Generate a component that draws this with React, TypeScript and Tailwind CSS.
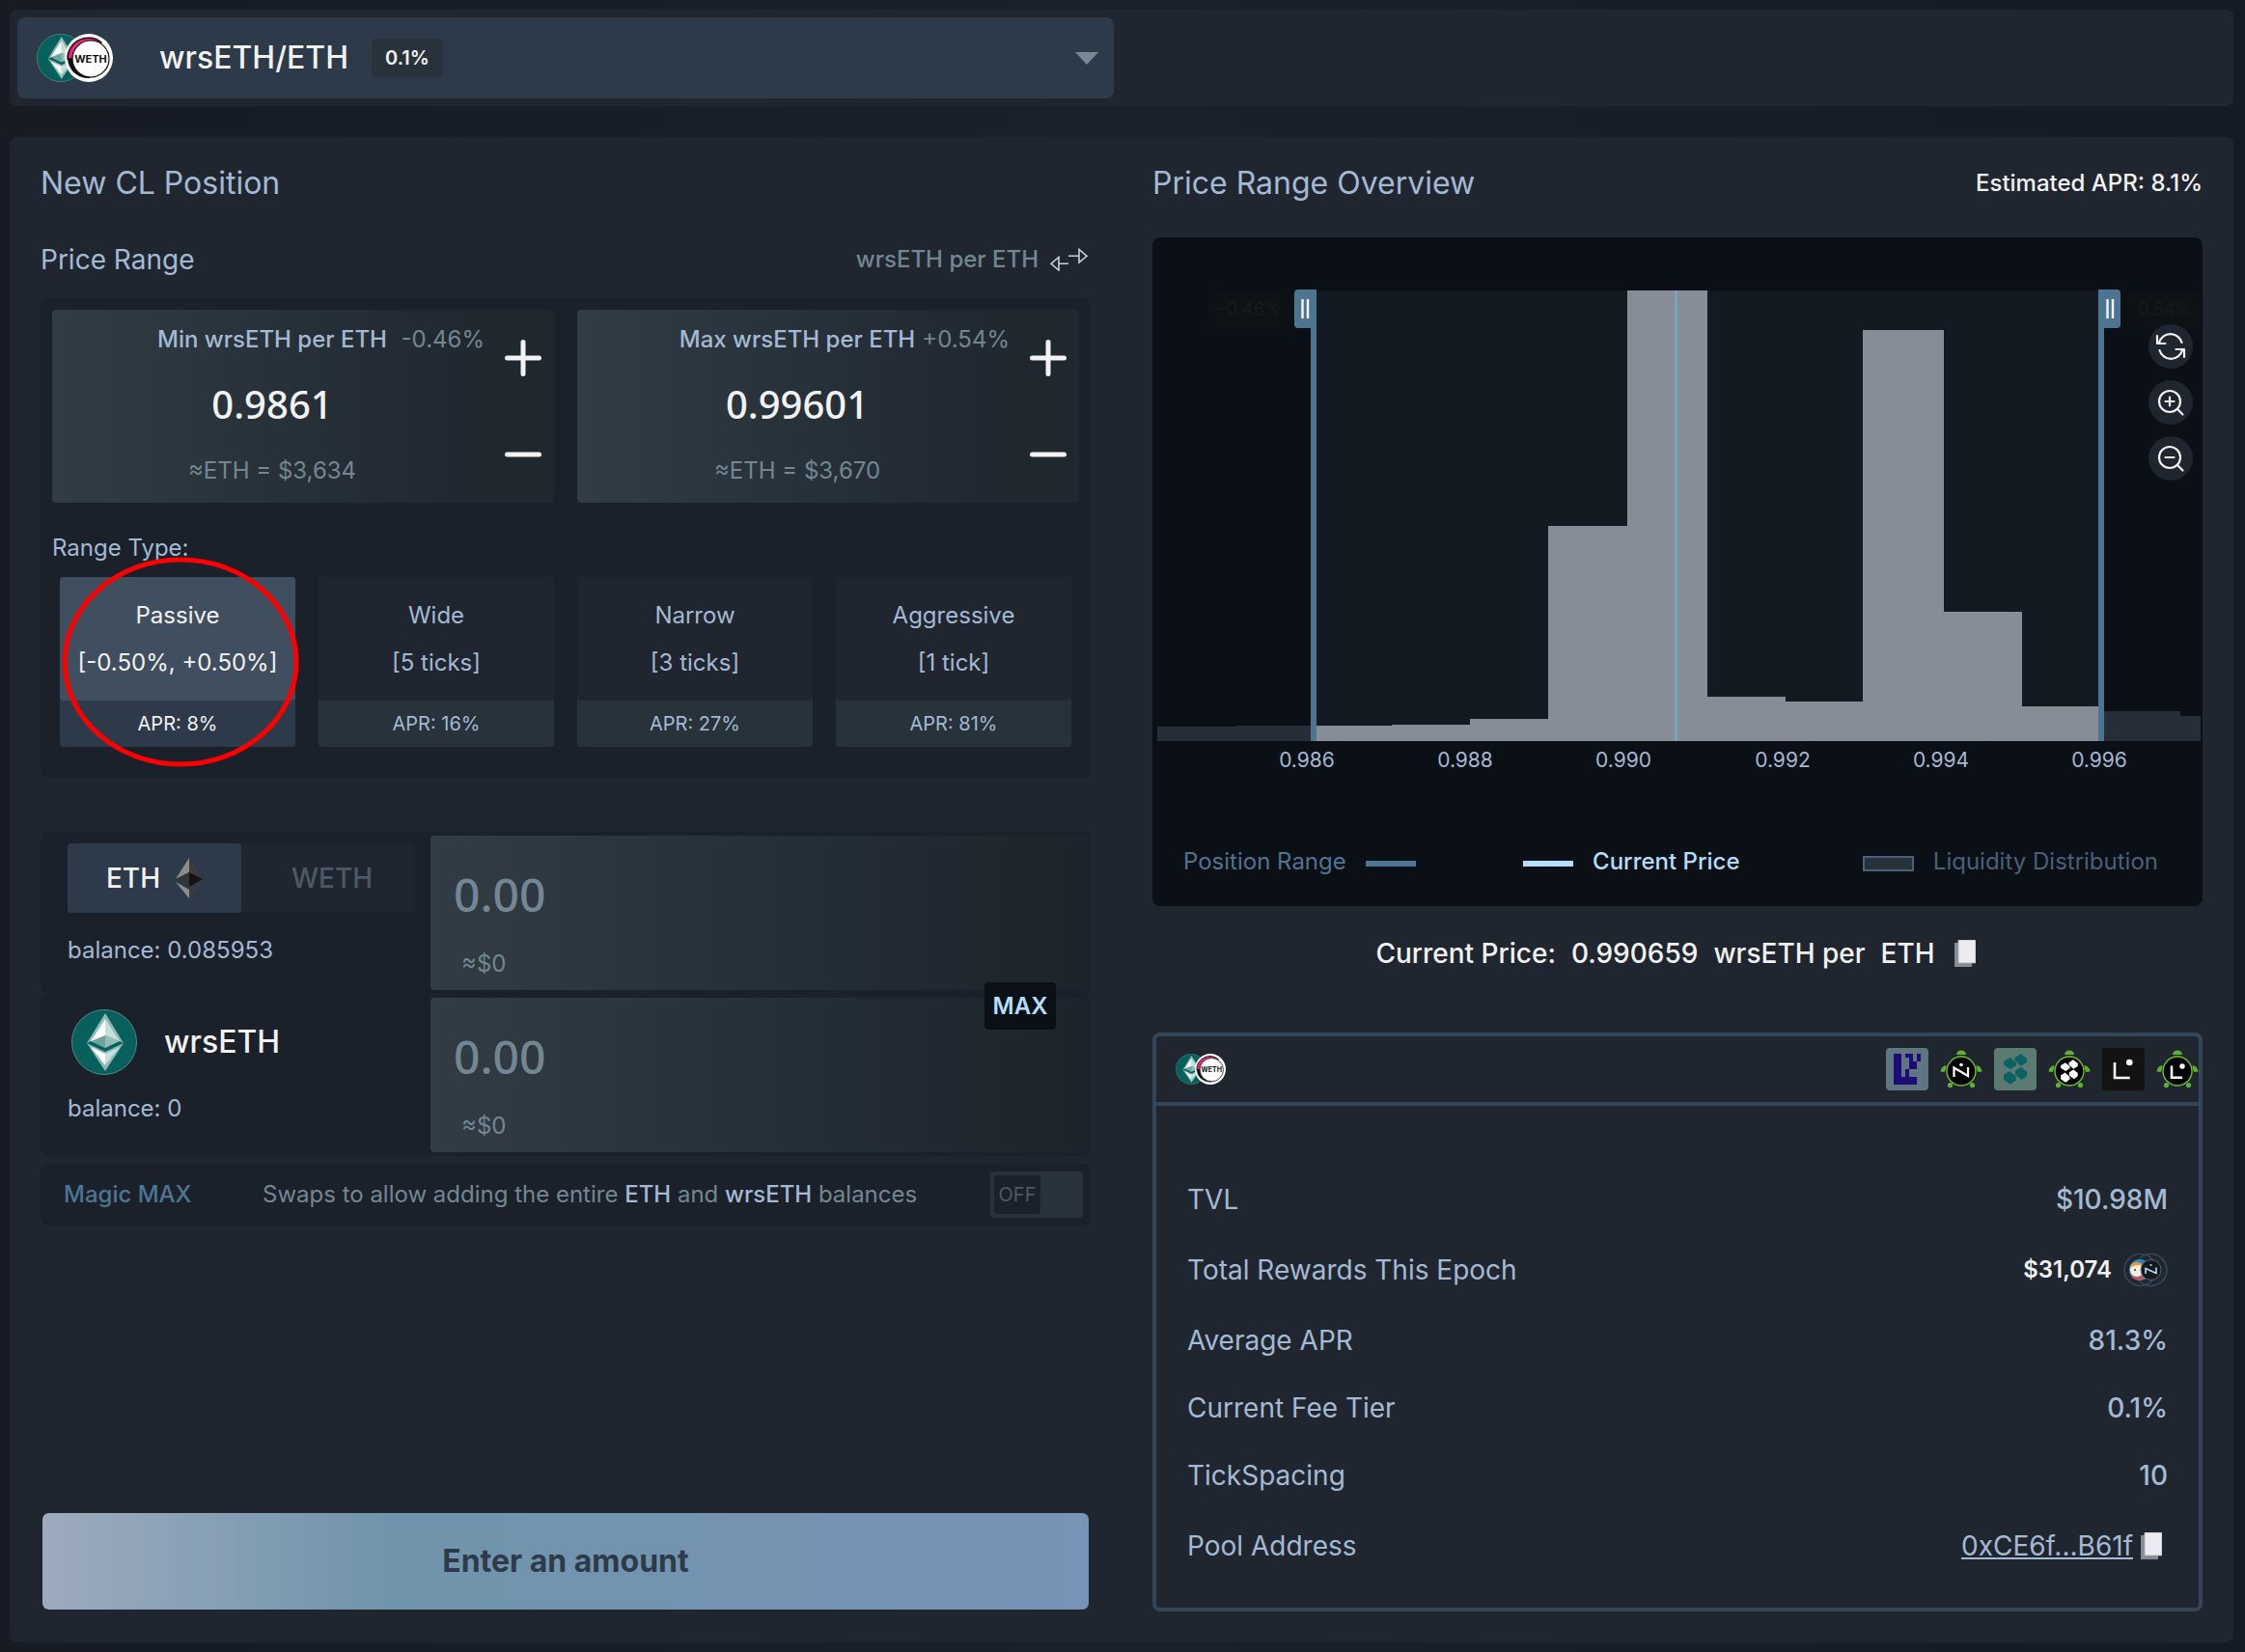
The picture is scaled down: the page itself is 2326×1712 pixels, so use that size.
import { useState } from 'react';

interface RangeType {
  name: string;
  detail: string;
  apr: string;
}

const RANGE_TYPES: RangeType[] = [
  { name: 'Passive', detail: '[-0.50%, +0.50%]', apr: '8%' },
  { name: 'Wide', detail: '[5 ticks]', apr: '16%' },
  { name: 'Narrow', detail: '[3 ticks]', apr: '27%' },
  { name: 'Aggressive', detail: '[1 tick]', apr: '81%' },
];

// [left, right, top] in chart units
const BARS_IN_RANGE = [
  [170, 248, 506],
  [248, 329, 505],
  [329, 410, 499],
  [410, 492, 299],
  [492, 575, 55],
  [575, 656, 476],
  [656, 736, 481],
  [736, 820, 96],
  [820, 901, 388],
  [901, 980, 486],
];

const BARS_OUTSIDE = [
  [5, 86, 507],
  [86, 164, 506],
  [986, 1065, 491],
  [1065, 1086, 496],
];

const AXIS_LABELS = [
  { x: 160, label: '0.986' },
  { x: 324, label: '0.988' },
  { x: 488, label: '0.990' },
  { x: 653, label: '0.992' },
  { x: 817, label: '0.994' },
  { x: 981, label: '0.996' },
];

const BASELINE = 522;

function WrsEthCoin({ className }: { className: string }) {
  return (
    <svg viewBox="0 0 68 68" className={className} aria-hidden="true">
      <circle cx="34" cy="34" r="33.5" fill="#08605c" stroke="#4f8a86" strokeWidth="1" />
      <path d="M35 4 L54 35 L35 64 L16 35 Z" fill="#8fb9b5" />
      <path d="M35 10 L20 33 L35 40 Z" fill="#ffffff" />
      <path d="M35 10 L50 33 L35 40 Z" fill="#c5e0dd" />
      <path d="M20 33 L35 27 L50 33 L35 40 Z" fill="#6fa39f" />
      <path d="M35 27 L50 33 L35 40 Z" fill="#94bcb8" />
      <path d="M16 35 L35 44 L54 35 L50 33 L35 40 L20 33 Z" fill="#08605c" />
      <path d="M20 39 L35 46 L35 58 Z" fill="#ffffff" />
      <path d="M50 39 L35 46 L35 58 Z" fill="#c5e0dd" />
    </svg>
  );
}

function WethCoin({ className }: { className: string }) {
  return (
    <svg viewBox="0 0 50 50" className={className} aria-hidden="true">
      <circle cx="25" cy="25" r="25" fill="#ffffff" />
      <path d="M3 26 A21.5 21.5 0 0 1 38 9 L25 25 Z" fill="#f5217f" stroke="#111111" strokeWidth="1.5" />
      <path d="M3 26 A21.5 21.5 0 0 0 25 46 L32 44 L25 25 Z" fill="#0c0c0c" />
      <circle cx="27" cy="26" r="19" fill="#ffffff" stroke="#111111" strokeWidth="1.2" />
      <text
        x="27"
        y="30"
        textAnchor="middle"
        fontFamily="Inter, sans-serif"
        fontSize="11"
        fontWeight="700"
        fill="#111111"
      >
        WETH
      </text>
    </svg>
  );
}

function EthMark() {
  return (
    <svg viewBox="0 0 28 42" className="h-[42px] w-7" aria-hidden="true">
      <path d="M14 0 L0 22 L14 15 Z" fill="#8c8c8c" />
      <path d="M14 0 L28 22 L14 15 Z" fill="#3c3c3b" />
      <path d="M0 22 L14 15 L14 30 Z" fill="#343434" />
      <path d="M28 22 L14 15 L14 30 Z" fill="#141414" />
      <path d="M0 25 L14 33 L14 42 Z" fill="#8c8c8c" />
      <path d="M28 25 L14 33 L14 42 Z" fill="#3c3c3b" />
    </svg>
  );
}

function SwapArrows() {
  return (
    <svg
      viewBox="0 0 39 24"
      className="h-6 w-[39px]"
      fill="none"
      stroke="#c9ced6"
      strokeWidth="1.6"
      aria-hidden="true"
    >
      <path d="M1 16.3 L9 9.5 V23 Z M9 16.3 H19" />
      <path d="M38 8.3 L30 1.5 V15 Z M30 8.3 H19" />
    </svg>
  );
}

function CopyIcon() {
  return (
    <svg viewBox="0 0 22 28" className="h-7 w-[22px]" aria-hidden="true">
      <rect x="0" y="3" width="18" height="25" fill="#868b94" />
      <rect x="4" y="0" width="18" height="24" fill="#ebebf0" stroke="#a9acb3" strokeWidth="0.8" />
    </svg>
  );
}

function ScrollPieces() {
  return (
    <>
      <path d="M21.5 10 L27.5 6 L34 11 V15 L28 18.8 L21.5 13 Z" />
      <path d="M10 14 L16.5 10 L23 15.5 V18 L17 22 L10 17.5 Z" />
      <path d="M22 23.5 L28 19.8 L34 24.5 V29 L28.5 33 L22 27.5 Z" />
      <path d="M10 28 L16 24 L22.8 29.5 V33.5 L17 37.8 L10 33 Z" />
    </>
  );
}

function Turtle({ children }: { children: React.ReactNode }) {
  return (
    <svg viewBox="0 0 44 44" className="size-11" aria-hidden="true">
      <g fill="#5fb32c">
        <path d="M17 7 Q17.5 2.5 22 2.5 Q26.5 2.5 27 7 Z" />
        <path d="M0.5 24.5 Q1 19 6.5 18 Q6.5 22 4.5 25 Z" />
        <path d="M43.5 24.5 Q43 19 37.5 18 Q37.5 22 39.5 25 Z" />
        <circle cx="10.5" cy="38.5" r="2.6" />
        <circle cx="33.5" cy="38.5" r="2.6" />
      </g>
      <circle cx="22" cy="24" r="15" fill="#000000" stroke="#6cc332" strokeWidth="1.4" />
      {children}
    </svg>
  );
}

function BoosterIcons() {
  return (
    <div className="flex gap-3">
      <svg viewBox="0 0 44 44" className="size-11" aria-hidden="true">
        <rect width="44" height="44" rx="4" fill="#5f7682" />
        <path
          d="M8 6 H16 V30 H20 V22 H24 V10 H20 V6 H28 V14 H32 V22 H24 V30 H32 V38 H8 Z M32 6 H36 V14 H32 Z"
          fill="#1c0d74"
        />
      </svg>
      <Turtle>
        <path d="M14.5 30 V20.5 L29 29 V20" fill="none" stroke="#ffffff" strokeWidth="2.2" />
        <circle cx="22" cy="17.5" r="1.8" fill="#ffffff" />
      </Turtle>
      <svg viewBox="0 0 44 44" className="size-11" aria-hidden="true">
        <rect width="44" height="44" rx="4" fill="#5b7b72" />
        <g fill="#0b6162">
          <ScrollPieces />
        </g>
      </svg>
      <Turtle>
        <g fill="#ffffff" transform="translate(5.6 7.8) scale(0.74)">
          <ScrollPieces />
        </g>
      </Turtle>
      <svg viewBox="0 0 44 44" className="size-11" aria-hidden="true">
        <rect width="44" height="44" fill="#131313" />
        <path d="M13 15 V31 H28.7" fill="none" stroke="#ffffff" strokeWidth="2.6" />
        <circle cx="28.3" cy="15" r="3.3" fill="#ffffff" />
      </svg>
      <Turtle>
        <path d="M16 18.5 V30.8 H27" fill="none" stroke="#ffffff" strokeWidth="2.6" />
        <circle cx="27" cy="19" r="2.7" fill="#ffffff" />
      </Turtle>
    </div>
  );
}

function RewardCoins() {
  return (
    <svg viewBox="0 0 46 36" className="h-9 w-[46px]" aria-hidden="true">
      <circle cx="17.5" cy="18" r="16.5" fill="none" stroke="#34475a" strokeWidth="1.6" />
      <circle cx="28.5" cy="18" r="16.5" fill="none" stroke="#34475a" strokeWidth="1.6" />
      <circle cx="17" cy="18" r="11" fill="#2f86b8" />
      <path d="M7 17 Q8 9 16 11 Q21 12 22 18 Q20 25 14 25 Q7 25 7 17 Z" fill="#fbeade" />
      <path d="M7 16 Q8 9 15 10 Q19 11 20 14 Q13 11 7 16 Z" fill="#e8963f" />
      <path d="M8 24 Q14 27 21 24 L20 28 Q14 30 9 26 Z" fill="#d84a45" />
      <circle cx="12" cy="18" r="1" fill="#333333" />
      <circle cx="28.5" cy="18" r="10.5" fill="#16181c" stroke="#4f7a96" strokeWidth="0.8" />
      <path d="M23 22 V16.5 L34 21.5 V15.5" fill="none" stroke="#b3defb" strokeWidth="1.6" />
      <circle cx="28.5" cy="13" r="1.1" fill="#b3defb" />
    </svg>
  );
}

function PriceCard({
  id,
  label,
  pct,
  value,
  approx,
  onChange,
}: {
  id: string;
  label: string;
  pct: string;
  value: string;
  approx: string;
  onChange: (v: string) => void;
}) {
  return (
    <div className="flex h-[200px] flex-1 rounded bg-linear-to-r from-[#313c45] via-[#27313a] via-45% to-[#1f272f] to-88%">
      <div className="flex min-w-0 flex-1 flex-col gap-7 pt-[15px] text-2xl">
        <div className="grid grid-cols-[1fr_auto_1fr] leading-8">
          <label htmlFor={id} className="col-start-2 font-medium text-[#a3bad2]">
            {label}
          </label>
          <span className="pr-2 text-right text-[#728792]">{pct}</span>
        </div>
        <input
          id={id}
          value={value}
          onChange={(e) => onChange(e.target.value)}
          className="h-12 w-full bg-transparent pb-0.5 text-center font-['Noto_Sans',sans-serif] text-[40px] font-medium text-[#f2f2f2] outline-none"
        />
        <p className="text-center leading-8 text-[#728792]">{approx}</p>
      </div>
      <div className="flex w-16 flex-col">
        <button aria-label={`Increase ${label}`} className="flex h-[100px] items-center justify-center">
          <svg viewBox="0 0 38 38" className="size-[38px]" stroke="#f2f2f2" strokeWidth="5" strokeLinecap="round">
            <path d="M2.5 19 H35.5 M19 2.5 V35.5" />
          </svg>
        </button>
        <button aria-label={`Decrease ${label}`} className="flex h-[100px] items-center justify-center">
          <svg viewBox="0 0 38 38" className="size-[38px]" stroke="#f2f2f2" strokeWidth="5" strokeLinecap="round">
            <path d="M2.5 19 H35.5" />
          </svg>
        </button>
      </div>
    </div>
  );
}

function AmountField({ label }: { label: string }) {
  return (
    <div className="flex-1 rounded bg-linear-to-r from-[#313c45] via-[#263139] via-45% to-[#1c232b] pl-6 pt-8">
      <input
        aria-label={label}
        placeholder="0.00"
        className="block h-14 w-full bg-transparent font-['Noto_Sans',sans-serif] text-5xl font-medium text-[#f2f2f2] outline-none placeholder:text-[#728792]"
      />
      <p className="mt-[29px] pl-2 text-2xl leading-8 text-[#728792]">≈$0</p>
    </div>
  );
}

function LiquidityChart() {
  return (
    <svg viewBox="0 0 1088 600" className="block w-full" fontFamily="Inter, sans-serif">
      <rect x="58" y="55" width="82" height="41" rx="8" fill="#0d1216" />
      <text x="99" y="81" textAnchor="middle" fontSize="18" fill="#151b20">
        −0.46%
      </text>
      <rect x="1009" y="55" width="79" height="41" rx="8" fill="#0d1216" />
      <text x="1049" y="81" textAnchor="middle" fontSize="18" fill="#151b20">
        0.54%
      </text>
      <rect x="164" y="55" width="822" height="467" fill="#131a21" />
      {BARS_OUTSIDE.map(([x1, x2, y]) => (
        <rect key={x1} x={x1} y={y} width={x2 - x1} height={BASELINE - y} fill="#262f38" />
      ))}
      {BARS_IN_RANGE.map(([x1, x2, y]) => (
        <rect key={x1} x={x1} y={y} width={x2 - x1} height={BASELINE - y} fill="#878d96" />
      ))}
      <rect x="541" y="55" width="3" height="467" fill="#7ba3be" />
      <rect x="164" y="54" width="6" height="468" fill="#4d7590" />
      <rect x="980" y="54" width="6" height="468" fill="#4d7590" />
      <path d="M170 54 H151 Q147 54 147 58 V90 Q147 94 151 94 H170 Z" fill="#4d7590" />
      <path d="M980 54 H999 Q1003 54 1003 58 V90 Q1003 94 999 94 H980 Z" fill="#4d7590" />
      <path d="M155.5 64 V84 M161 64 V84 M989.5 64 V84 M995 64 V84" stroke="#f5f7fa" strokeWidth="2.4" />
      {AXIS_LABELS.map(({ x, label }) => (
        <text key={label} x={x} y="549" textAnchor="middle" fontSize="21" fill="#a3bad2">
          {label}
        </text>
      ))}
    </svg>
  );
}

function ChartButton({ label, children }: { label: string; children: React.ReactNode }) {
  return (
    <button aria-label={label} className="flex size-[46px] items-center justify-center rounded-full bg-[#20262f]">
      <svg
        viewBox="-16 -16 32 32"
        className="size-8"
        fill="none"
        stroke="#f2f2f2"
        strokeWidth="2.2"
        strokeLinecap="round"
        strokeLinejoin="round"
      >
        {children}
      </svg>
    </button>
  );
}

export default function App() {
  const [minPrice, setMinPrice] = useState('0.9861');
  const [maxPrice, setMaxPrice] = useState('0.99601');
  const [rangeType, setRangeType] = useState('Passive');
  const [magicMax, setMagicMax] = useState(false);

  return (
    <div className="flex min-h-screen flex-col gap-8 bg-linear-to-r from-[#161b24] via-[#19212b] to-[#151b24] py-2.5 pl-2.5 pr-3 font-[Inter,sans-serif] text-[#a3bad2]">
      <header className="rounded-lg bg-[#20262f] p-2">
        <div className="flex h-[84px] w-1/2 max-w-[1136px] items-center rounded-lg bg-[#2d3a4a] pl-5 pr-4">
          <div className="flex">
            <WrsEthCoin className="size-[50px]" />
            <WethCoin className="-ml-[21px] size-[50px]" />
          </div>
          <select
            aria-label="Pool"
            className="ml-12 appearance-none bg-transparent text-[32px] leading-10 font-medium text-[#f2f2f2] outline-none [field-sizing:content]"
          >
            <option>wrsETH/ETH</option>
          </select>
          <span className="ml-6 rounded bg-[#28323b] px-3.5 py-1.5 text-xl leading-7 font-semibold text-[#f2f2f2]">
            0.1%
          </span>
          <svg viewBox="0 0 24 13" className="ml-auto h-[13px] w-6" fill="#748994" aria-hidden="true">
            <path d="M0 0 H24 L12 13 Z" />
          </svg>
        </div>
      </header>

      <main className="grid flex-1 grid-cols-2 gap-16 rounded-lg bg-[#20262f] px-8 pt-7 pb-8">
        <section className="flex flex-col">
          <h1 className="text-[32px] leading-10">New CL Position</h1>
          <div className="mt-10 flex h-[38px] items-center justify-between">
            <h2 className="text-[28px] leading-9">Price Range</h2>
            <button className="flex items-center gap-3 pr-[3px] text-2xl font-medium text-[#728792]">
              wrsETH per ETH
              <SwapArrows />
            </button>
          </div>

          <div className="mt-[21px] rounded-lg bg-[#1b212a] px-3 pt-3 pb-8">
            <div className="flex gap-6">
              <PriceCard
                id="min-price"
                label="Min wrsETH per ETH"
                pct="-0.46%"
                value={minPrice}
                approx="≈ETH = $3,634"
                onChange={setMinPrice}
              />
              <PriceCard
                id="max-price"
                label="Max wrsETH per ETH"
                pct="+0.54%"
                value={maxPrice}
                approx="≈ETH = $3,670"
                onChange={setMaxPrice}
              />
            </div>
            <p className="mt-[31px] text-2xl leading-8">Range Type:</p>
            <div className="mt-3.5 grid grid-cols-4 gap-6 px-2">
              {RANGE_TYPES.map((type) => {
                const active = type.name === rangeType;
                return (
                  <div key={type.name} className="relative">
                    <button
                      aria-pressed={active}
                      onClick={() => setRangeType(type.name)}
                      className={`block w-full rounded ${
                        active ? 'bg-[#2d3a4a] text-[#f2f2f2]' : 'bg-[#28323b]'
                      }`}
                    >
                      <span
                        className={`flex h-32 flex-col items-center justify-center gap-[17px] rounded text-2xl leading-8 ${
                          active ? 'bg-[#404f5f]' : 'bg-[#20262f]'
                        }`}
                      >
                        <span>{type.name}</span>
                        <span>{type.detail}</span>
                      </span>
                      <span className="block text-xl leading-[48px]">APR: {type.apr}</span>
                    </button>
                    {type.name === 'Passive' && (
                      <svg
                        viewBox="0 0 246 220"
                        className="pointer-events-none absolute -top-[22px] left-0.5 h-[220px] w-[246px] max-w-none"
                        aria-hidden="true"
                      >
                        <ellipse cx="123" cy="110" rx="120" ry="106" fill="none" stroke="#ff0000" strokeWidth="5" />
                      </svg>
                    )}
                  </div>
                );
              })}
            </div>
          </div>

          <div className="mt-14 flex h-[168px] rounded-lg bg-[#1b212a] py-1">
            <div className="w-[404px] pt-2 pr-4 pl-7">
              <div className="flex h-[72px] rounded bg-[#20262f] text-[28px] font-medium">
                <button className="flex w-1/2 items-center justify-center gap-4 rounded bg-[#2d3a4a] text-[#f2f2f2]">
                  ETH
                  <EthMark />
                </button>
                <button className="w-1/2 pl-2 text-[#4a5a66]">WETH</button>
              </div>
              <p className="mt-[23px] text-2xl leading-8">balance: 0.085953</p>
            </div>
            <AmountField label="ETH amount" />
          </div>

          <div className="relative flex h-[168px] rounded-lg bg-[#1b212a] py-1">
            <div className="w-[404px] pt-3 pl-7">
              <div className="flex items-center gap-7 pl-1 text-[32px] font-medium text-[#f2f2f2]">
                <WrsEthCoin className="size-[68px]" />
                wrsETH
              </div>
              <p className="mt-[19px] text-2xl leading-8">balance: 0</p>
            </div>
            <AmountField label="wrsETH amount" />
            <button className="absolute -top-3 right-9 h-[49px] w-[74px] rounded bg-[#0b0f16] text-2xl font-semibold text-[#b3defb]">
              MAX
            </button>
          </div>

          <div className="mt-2 flex h-16 items-center rounded-lg bg-[#1b212a] pr-2 pl-6 text-2xl">
            <span className="w-[206px] font-medium text-[#4d7590]">Magic MAX</span>
            <span className="text-[#728792]">
              Swaps to allow adding the entire <span className="font-medium text-[#a3bad2]">ETH</span> and{' '}
              <span className="font-medium text-[#a3bad2]">wrsETH</span> balances
            </span>
            <label className="ml-auto flex h-12 w-24 items-center rounded bg-[#28323b] p-1">
              <input
                type="checkbox"
                aria-label="Magic MAX"
                checked={magicMax}
                onChange={(e) => setMagicMax(e.target.checked)}
                className="peer sr-only"
              />
              <span className="flex h-10 w-12 items-center justify-center rounded bg-[#1b212a] text-xl text-[#4a5a66] peer-checked:ml-auto">
                {magicMax ? 'ON' : 'OFF'}
              </span>
            </label>
          </div>

          <button className="mt-auto h-[104px] rounded-lg border-2 border-[#20262f] bg-linear-to-r from-[#9dabbd] via-[#7094ab] via-33% to-[#7793b6] bg-clip-padding text-[32px] font-bold text-[#2d3a4a]">
            Enter an amount
          </button>
        </section>

        <section className="flex flex-col">
          <div className="flex items-center justify-between">
            <h2 className="text-[32px] leading-10">Price Range Overview</h2>
            <p className="text-2xl font-medium text-[#f2f2f2]">Estimated APR: 8.1%</p>
          </div>

          <div className="relative mt-9 rounded-lg bg-[#0b0f16]">
            <LiquidityChart />
            <div className="absolute top-[90px] right-2.5 flex flex-col gap-3">
              <ChartButton label="Reset zoom">
                <path d="M-14 -11 V-3 H-5.5 M-12 -4 A12.2 12.2 0 0 1 11.5 -4" />
                <path d="M14 11 V3 H5.5 M12 4 A12.2 12.2 0 0 1 -11.5 4" />
              </ChartButton>
              <ChartButton label="Zoom in">
                <circle cx="-1" cy="-1" r="11" />
                <path d="M7 7 L12.5 12.5 M-5.5 -1 H3.5 M-1 -5.5 V3.5" />
              </ChartButton>
              <ChartButton label="Zoom out">
                <circle cx="-1" cy="-1" r="11" />
                <path d="M7 7 L12.5 12.5 M-5.5 -1 H3.5" />
              </ChartButton>
            </div>
            <div className="flex justify-between pt-[31px] pr-[46px] pb-[30px] pl-8 text-2xl leading-8">
              <div className="flex items-center gap-5 text-[#4d7590]">
                Position Range
                <span className="mt-1 h-1.5 w-[52px] bg-[#4d7590]" />
              </div>
              <div className="mr-4 flex items-center gap-5 font-medium text-[#b3defb]">
                <span className="mt-1 h-1.5 w-[52px] bg-[#b3defb]" />
                Current Price
              </div>
              <div className="flex items-center gap-5 text-[#4a6077]">
                <span className="mt-1 h-4 w-[53px] border-2 border-[#4a6077] bg-[#28323b]" />
                Liquidity Distribution
              </div>
            </div>
          </div>

          <div className="mt-[31px] flex items-center justify-center gap-4 text-[28px] leading-9 font-medium text-[#f2f2f2]">
            <span>Current Price:</span>
            <span>0.990659</span>
            <span>wrsETH per</span>
            <span>ETH</span>
            <button aria-label="Copy current price" className="mx-1">
              <CopyIcon />
            </button>
          </div>

          <div className="mt-16 flex-1 rounded-lg border-4 border-[#34475a]">
            <div className="flex h-[72px] items-center justify-between border-b-4 border-[#34475a] pl-5">
              <div className="flex">
                <WrsEthCoin className="size-8" />
                <WethCoin className="-ml-3 size-8" />
              </div>
              <BoosterIcons />
            </div>
            <dl className="px-8 pt-[62px] text-[28px] leading-9">
              <div className="flex h-[70px] items-center justify-between">
                <dt>TVL</dt>
                <dd className="font-medium">$10.98M</dd>
              </div>
              <div className="flex h-[76px] items-center justify-between">
                <dt>Total Rewards This Epoch</dt>
                <dd className="flex items-center gap-3 text-2xl font-semibold text-[#f2f2f2]">
                  $31,074
                  <RewardCoins />
                </dd>
              </div>
              <div className="flex h-[70px] items-center justify-between">
                <dt>Average APR</dt>
                <dd className="font-medium">81.3%</dd>
              </div>
              <div className="flex h-[70px] items-center justify-between">
                <dt>Current Fee Tier</dt>
                <dd className="font-medium">0.1%</dd>
              </div>
              <div className="flex h-[70px] items-center justify-between">
                <dt>TickSpacing</dt>
                <dd className="font-medium">10</dd>
              </div>
              <div className="flex h-[76px] items-center justify-between">
                <dt>Pool Address</dt>
                <dd className="flex items-center gap-2 pr-1.5">
                  <a href="#pool" className="underline">
                    0xCE6f...B61f
                  </a>
                  <button aria-label="Copy pool address">
                    <CopyIcon />
                  </button>
                </dd>
              </div>
            </dl>
          </div>
        </section>
      </main>
    </div>
  );
}
